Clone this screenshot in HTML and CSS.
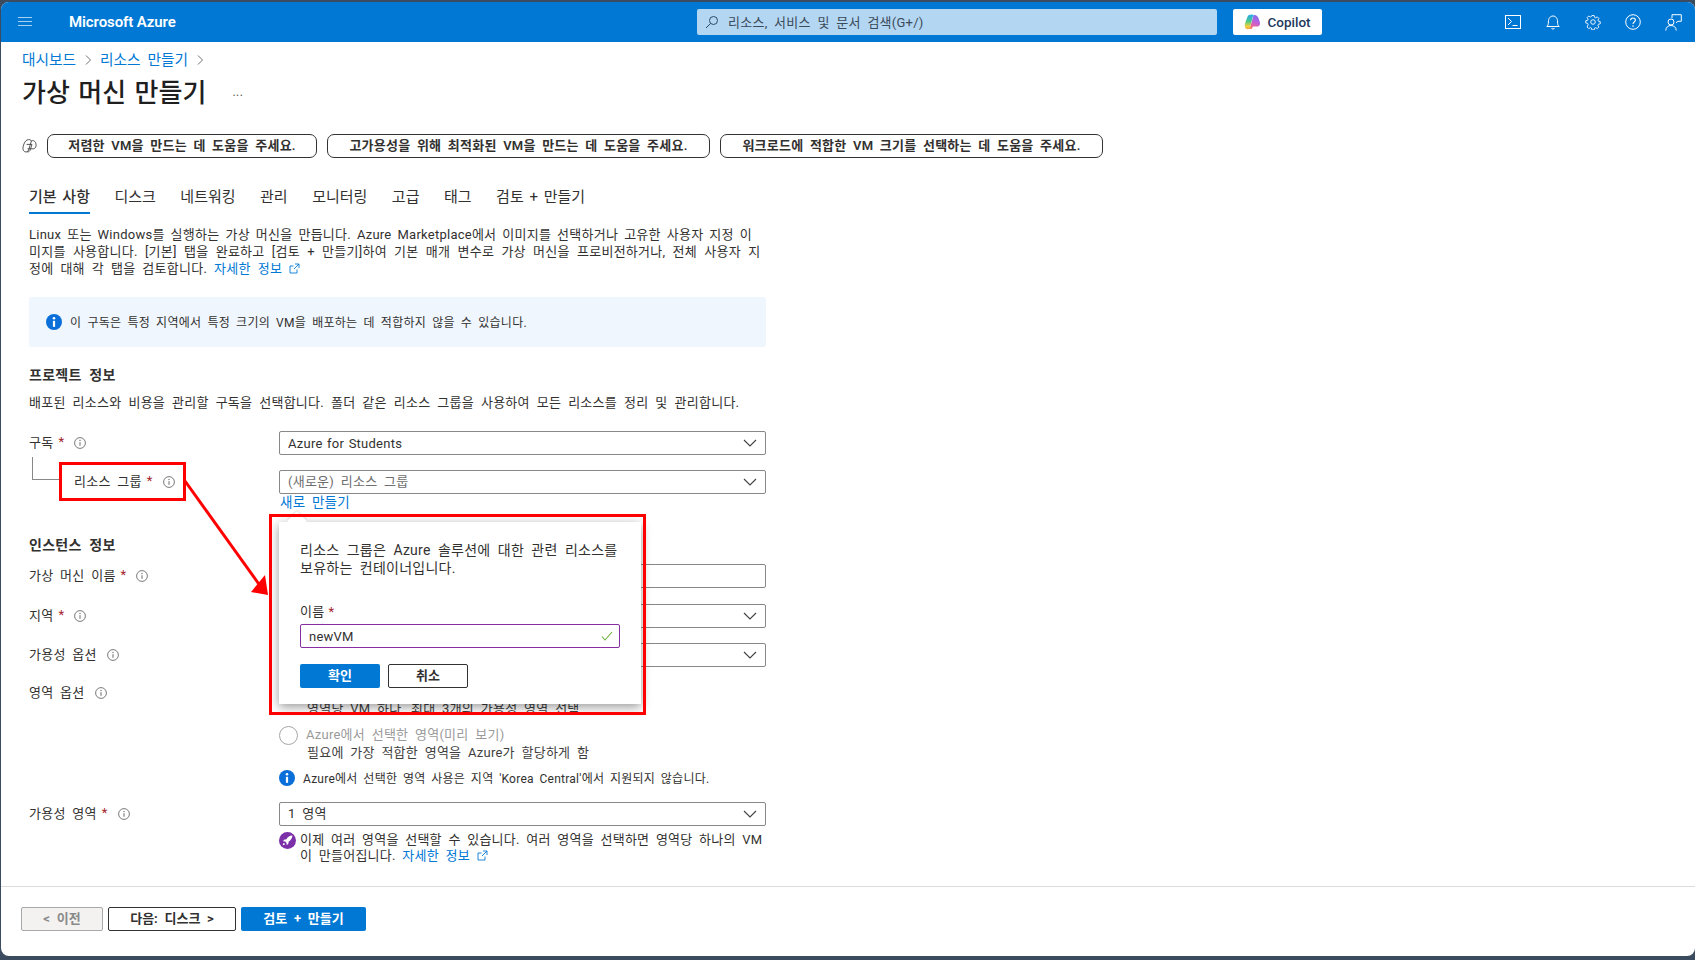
FILE: index.html
```html
<!DOCTYPE html>
<html lang="ko">
<head>
<meta charset="utf-8">
<title>가상 머신 만들기 - Microsoft Azure</title>
<link rel="stylesheet" href="styles.css">
</head>
<body>
<svg class="defs" width="0" height="0" aria-hidden="true">
  <defs>
    <symbol id="i-info" viewBox="0 0 12 12">
      <circle cx="6" cy="6" r="5.4" fill="none" stroke="#6b6b6b" stroke-width="0.9"/>
      <path d="M6 5.2v3.6" stroke="#6b6b6b" stroke-width="1"/>
      <circle cx="6" cy="3.5" r="0.65" fill="#6b6b6b"/>
    </symbol>
    <symbol id="i-chev" viewBox="0 0 14 8">
      <path d="M1 1l6 6 6-6" fill="none" stroke="#404040" stroke-width="1.1"/>
    </symbol>
    <symbol id="i-blue" viewBox="0 0 16 16">
      <circle cx="8" cy="8" r="8" fill="#0a6fd8"/>
      <circle cx="8" cy="4.2" r="1.3" fill="#fff"/>
      <path d="M8 6.8v6" stroke="#fff" stroke-width="2.2"/>
    </symbol>
    <symbol id="i-ext" viewBox="0 0 11 11">
      <path d="M8 6.5V10H1V3h3.5M6 1h4v4M10 1L5 6" fill="none" stroke="#0078d4" stroke-width="0.9"/>
    </symbol>
    <linearGradient id="cp-a" x1="0.4" y1="0" x2="0.4" y2="1"><stop offset="0" stop-color="#2aa8f2"/><stop offset="0.45" stop-color="#46c98a"/><stop offset="0.8" stop-color="#f2d13f"/><stop offset="1" stop-color="#f5a53a"/></linearGradient>
    <linearGradient id="cp-c" x1="0.7" y1="0" x2="0.3" y2="1"><stop offset="0" stop-color="#7a6ff0"/><stop offset="0.5" stop-color="#c45fd8"/><stop offset="0.85" stop-color="#f0668a"/><stop offset="1" stop-color="#f58a4a"/></linearGradient>
  </defs>
</svg>

<div class="page">
  <header class="topbar">
    <div class="brand-area">
      <button class="menu-btn" aria-label="메뉴">
        <svg width="14" height="10" viewBox="0 0 14 10"><path d="M0 .5h14M0 4.5h14M0 8.5h14" stroke="#a8d0f0" stroke-width="1"/></svg>
      </button>
      <span class="brand">Microsoft Azure</span>
    </div>
    <div class="search">
      <svg width="14" height="14" viewBox="0 0 14 14"><circle cx="8.5" cy="5.5" r="4" fill="none" stroke="#2b4a66" stroke-width="1"/><path d="M5.6 8.4L1 13" stroke="#2b4a66" stroke-width="1"/></svg>
      <span>리소스, 서비스 및 문서 검색(G+/)</span>
    </div>
    <button class="copilot">
      <svg width="17" height="16" viewBox="0 0 17 16">
        <path d="M10 1C12 .5 13.7 2 14.5 4L15.8 8C16.6 10.5 15.4 12.5 13 12.5H9L7.5 15H4C5.5 14.5 6.2 13 6.6 11.5L8.5 5C9 3.5 9 2 10 1Z" fill="url(#cp-c)"/>
        <path d="M5 1C6.5.3 9 .3 10 1 9 1.8 8.6 3.4 8.2 5L6.6 11.5C6.2 13.4 5.4 15.2 3.4 15.2 1.2 15 .3 12 1 9.5L3 4C3.5 2.5 4 1.5 5 1Z" fill="url(#cp-a)"/>
      </svg>
      <span>Copilot</span>
    </button>
    <div class="top-icons">
      <span class="top-icon"><svg width="16" height="14" viewBox="0 0 16 14"><rect x=".5" y=".5" width="15" height="13" fill="none" stroke="#fff"/><path d="M3 3l3.5 3.5L3 10M7.5 10.5h5" fill="none" stroke="#fff"/></svg></span>
      <span class="top-icon"><svg width="14" height="15" viewBox="0 0 14 15"><path d="M.8 11.5c1.2-1 1.6-2 1.6-4.5C2.4 3.4 4.2 1 7 1s4.6 2.4 4.6 6c0 2.5.4 3.5 1.6 4.5Z" fill="none" stroke="#fff"/><path d="M5.5 13a1.6 1.6 0 0 0 3 0" fill="none" stroke="#fff"/></svg></span>
      <span class="top-icon"><svg width="16" height="16" viewBox="0 0 16 16"><circle cx="8" cy="8" r="2.3" fill="none" stroke="#fff" stroke-width=".9"/><path d="M6.7.7h2.6l.4 2 1.3.6 1.8-1.1 1.8 1.8-1.1 1.8.6 1.3 2 .4v2.6l-2 .4-.6 1.3 1.1 1.8-1.8 1.8-1.8-1.1-1.3.6-.4 2H6.7l-.4-2-1.3-.6-1.8 1.1-1.8-1.8L2.5 10.8l-.6-1.3-2-.4V6.5l2-.4.6-1.3-1.1-1.8 1.8-1.8L5 2.3l1.3-.6Z" transform="translate(.9 .9) scale(.89)" fill="none" stroke="#fff" stroke-width="1"/></svg></span>
      <span class="top-icon"><svg width="16" height="16" viewBox="0 0 16 16"><circle cx="8" cy="8" r="7.3" fill="none" stroke="#fff"/><path d="M5.6 6.2C5.6 4.8 6.7 4 8 4s2.4.9 2.4 2.1c0 1.9-2.4 1.9-2.4 3.9" fill="none" stroke="#fff" stroke-width="1.1"/><circle cx="8" cy="12" r=".8" fill="#fff"/></svg></span>
      <span class="top-icon"><svg width="17" height="17" viewBox="0 0 17 17"><path d="M7 4.2V.7h9.3v6.6h-3.4l-1.9 1.5" fill="none" stroke="#fff"/><circle cx="6" cy="8" r="3" fill="none" stroke="#fff"/><path d="M.8 16.5c0-3.2 2.3-5 5.2-5s5.2 1.8 5.2 5" fill="none" stroke="#fff"/></svg></span>
    </div>
  </header>

  <main class="content">
    <nav class="crumbs">
      <a class="link">대시보드</a>
      <svg class="crumb-sep" width="6" height="10" viewBox="0 0 6 10"><path d="M1 .5l4.5 4.5L1 9.5" fill="none" stroke="#666" stroke-width=".9"/></svg>
      <a class="link">리소스 만들기</a>
      <svg class="crumb-sep" width="6" height="10" viewBox="0 0 6 10"><path d="M1 .5l4.5 4.5L1 9.5" fill="none" stroke="#666" stroke-width=".9"/></svg>
    </nav>
    <div class="title-row">
      <h1>가상 머신 만들기</h1>
      <span class="ellipsis">...</span>
    </div>

    <div class="suggests">
      <svg class="sg-icon" width="15" height="14" viewBox="0 0 15 14"><path d="M5 1C7 .2 9 .6 9.4 2L7 9.8C6.6 11.6 5.6 13 4 13 2 13 .6 11 1 8.4 1.4 5.6 3 1.8 5 1ZM9.4 2C11.4.8 13.6 2.4 14 5 14.4 7.2 13.6 9.6 11.4 9.8H5.6" fill="none" stroke="#444" stroke-width=".9"/><path d="M4.6 5.4H10L8.2 11c-.4 1.2-1.4 2-2.8 2" fill="none" stroke="#444" stroke-width=".9"/></svg>
      <button class="pill p1">저렴한 VM을 만드는 데 도움을 주세요.</button>
      <button class="pill p2">고가용성을 위해 최적화된 VM을 만드는 데 도움을 주세요.</button>
      <button class="pill p3">워크로드에 적합한 VM 크기를 선택하는 데 도움을 주세요.</button>
    </div>

    <div class="tabs">
      <span class="tab active">기본 사항</span>
      <span class="tab">디스크</span>
      <span class="tab">네트워킹</span>
      <span class="tab">관리</span>
      <span class="tab">모니터링</span>
      <span class="tab">고급</span>
      <span class="tab">태그</span>
      <span class="tab">검토 + 만들기</span>
    </div>

    <div class="form">
      <p class="intro">Linux 또는 Windows를 실행하는 가상 머신을 만듭니다. Azure Marketplace에서 이미지를 선택하거나 고유한 사용자 지정 이<br><span class="intro-l2">미지를 사용합니다. [기본] 탭을 완료하고 [검토 + 만들기]하여 기본 매개 변수로 가상 머신을 프로비전하거나, 전체 사용자 지</span><br><span class="intro-l3">정에 대해 각 탭을 검토합니다. <a class="link">자세한 정보 <svg class="ext" width="11" height="11"><use href="#i-ext"/></svg></a></span></p>

      <div class="notice">
        <svg width="16" height="16"><use href="#i-blue"/></svg>
        <span class="lift-sm">이 구독은 특정 지역에서 특정 크기의 VM을 배포하는 데 적합하지 않을 수 있습니다.</span>
      </div>

      <h2 class="h-project">프로젝트 정보</h2>
      <p class="sub">배포된 리소스와 비용을 관리할 구독을 선택합니다. 폴더 같은 리소스 그룹을 사용하여 모든 리소스를 정리 및 관리합니다.</p>

      <div class="row r-sub">
        <div class="lab">구독<b>*</b><svg class="inf" width="12" height="12"><use href="#i-info"/></svg></div>
        <div class="sel latin">Azure for Students<svg width="14" height="8"><use href="#i-chev"/></svg></div>
      </div>
      <div class="row r-rg">
        <div class="lab lab-child">리소스 그룹<b>*</b><svg class="inf" width="12" height="12"><use href="#i-info"/></svg></div>
        <div class="sel muted"><span class="lift">(새로운) 리소스 그룹</span><svg width="14" height="8"><use href="#i-chev"/></svg></div>
      </div>
      <a class="link new-link">새로 만들기</a>

      <h2 class="h-inst">인스턴스 정보</h2>
      <div class="row r-vm">
        <div class="lab">가상 머신 이름<b>*</b><svg class="inf" width="12" height="12"><use href="#i-info"/></svg></div>
        <div class="sel"></div>
      </div>
      <div class="row r-region">
        <div class="lab">지역<b>*</b><svg class="inf" width="12" height="12"><use href="#i-info"/></svg></div>
        <div class="sel"><svg width="14" height="8"><use href="#i-chev"/></svg></div>
      </div>
      <div class="row r-avail">
        <div class="lab">가용성 옵션<svg class="inf" width="12" height="12"><use href="#i-info"/></svg></div>
        <div class="sel"><svg width="14" height="8"><use href="#i-chev"/></svg></div>
      </div>
      <div class="row r-zone">
        <div class="lab">영역 옵션<svg class="inf" width="12" height="12"><use href="#i-info"/></svg></div>
        <div class="zone-field">
          <div class="opt-desc first">영역당 VM 하나, 최대 3개의 가용성 영역 선택</div>
          <div class="opt"><span class="radio"></span><span class="lift">Azure에서 선택한 영역(미리 보기)</span></div>
          <div class="opt-desc">필요에 가장 적합한 영역을 Azure가 할당하게 함</div>
          <div class="hint"><svg width="16" height="16"><use href="#i-blue"/></svg><span class="lift-sm">Azure에서 선택한 영역 사용은 지역 'Korea Central'에서 지원되지 않습니다.</span></div>
        </div>
      </div>
      <div class="row r-az">
        <div class="lab">가용성 영역<b>*</b><svg class="inf" width="12" height="12"><use href="#i-info"/></svg></div>
        <div class="az-field">
          <div class="sel"><span class="lift">1 영역</span><svg width="14" height="8"><use href="#i-chev"/></svg></div>
          <div class="promo">
            <svg width="17" height="17" viewBox="0 0 17 17"><circle cx="8.5" cy="8.5" r="8.5" fill="#7b2fa8"/><path d="M13 3.6c-2.6.2-4.4 1.6-5.6 3.6L5 7.8l-1 1.4 2.2.4 1.2 1.2.4 2.2 1.4-1 .6-2.4c2-1.2 3.4-3.2 3.6-6ZM5 11c-.8.4-1.2 1.2-1.2 2.2 1 0 1.8-.4 2.2-1.2Z" fill="#fff"/></svg>
            <p>이제 여러 영역을 선택할 수 있습니다. 여러 영역을 선택하면 영역당 하나의 VM이 만들어집니다. <a class="link">자세한 정보 <svg class="ext" width="11" height="11"><use href="#i-ext"/></svg></a></p>
          </div>
        </div>
      </div>
    </div>
  </main>

  <footer class="footer">
    <button class="btn disabled">&lt; 이전</button>
    <button class="btn next">다음: 디스크 &gt;</button>
    <button class="btn primary">검토 + 만들기</button>
  </footer>

  <!-- Screenshot annotations and the flyout that lie over the form -->
  <span class="tree-line"></span>
  <span class="mark mark-label"></span>
  <svg class="arrow" width="100" height="130" viewBox="0 0 100 130">
    <path d="M2 2L78 108" stroke="#f00" stroke-width="3" fill="none"/>
    <path d="M85 116L68 113L82 96Z" fill="#f00"/>
  </svg>
  <div class="flyout">
    <span class="notch"></span>
    <p>리소스 그룹은 Azure 솔루션에 대한 관련 리소스를 보유하는 컨테이너입니다.</p>
    <div class="fly-label">이름<b>*</b></div>
    <div class="fly-input">newVM<svg width="12" height="10" viewBox="0 0 12 10"><path d="M1 5.5L4 9l7-8" fill="none" stroke="#6bb13a" stroke-width="1.1"/></svg></div>
    <div class="fly-btns">
      <button class="btn primary fly-btn">확인</button>
      <button class="btn next fly-btn">취소</button>
    </div>
  </div>
  <span class="mark mark-fly"></span>
</div>
</body>
</html>
```

FILE: styles.css
```css
* { box-sizing: border-box; }
html, body { margin: 0; height: 100%; }
body {
  background: #3b4c60;
  padding: 2px 0 4px 1px;
  font-family: Roboto, "Noto Sans CJK KR", sans-serif;
  font-size: 13px;
  letter-spacing: .25px;
  word-spacing: 3.2px;
  color: #323130;
  overflow: hidden;
}
.defs { position: absolute; }
p, h1, h2 { margin: 0; }
button { font: inherit; color: inherit; padding: 0; background: none; border: 0; letter-spacing: inherit; word-spacing: inherit; }
.lift { margin-bottom: 3px; }
.lift-sm { margin-bottom: 1px; }
.page {
  position: relative;
  height: 954px;
  background: #fff;
  border-radius: 8px 8px 8px 8px;
  overflow: hidden;
  display: flex;
  flex-direction: column;
}
.link { color: #0078d4; text-decoration: none; }

/* top bar */
.topbar {
  flex: 0 0 40px;
  background: #0078d4;
  display: flex;
  align-items: center;
  color: #fff;
}
.brand-area { flex: 0 0 696px; display: flex; align-items: center; }
.menu-btn { width: 68px; padding-left: 17px; display: flex; align-items: center; }
.brand { font-size: 15px; font-weight: 600; letter-spacing: -.1px; word-spacing: 0; }
.search {
  flex: 0 0 520px;
  height: 26px;
  background: #b3d6f2;
  border-radius: 2px;
  display: flex;
  align-items: center;
  gap: 9px;
  padding-left: 8px;
  color: #3b4a58;
  font-size: 13px;
}
.search span { margin-bottom: 2px; }
.copilot {
  flex: 0 0 89px;
  height: 26px;
  margin-left: 16px;
  background: #fff;
  border-radius: 2px;
  display: flex;
  align-items: center;
  justify-content: center;
  gap: 6px;
  color: #22395d;
  font-size: 13.5px;
  font-weight: 500;
  letter-spacing: 0;
}
.top-icons { margin-left: auto; margin-right: 0; display: flex; padding-right: 2px; }
.top-icon { width: 40px; height: 40px; display: flex; align-items: center; justify-content: center; }

/* main */
.content { flex: 1 1 auto; overflow: hidden; padding: 0 0 0 21px; }
.crumbs { height: 36px; padding-bottom: 4px; display: flex; align-items: center; font-size: 14.7px; letter-spacing: 0; }
.crumb-sep { margin: 3px 9px 0 9px; }
.title-row { height: 30px; padding-bottom: 6px; display: flex; align-items: center; }
h1 { font-size: 26px; font-weight: 500; color: #1f1f1f; letter-spacing: 0; word-spacing: 2px; }
.ellipsis { margin-left: 26px; margin-top: 4px; font-size: 12px; color: #555; letter-spacing: 0.5px; }

.suggests { margin-top: 26px; height: 24px; display: flex; align-items: center; }
.sg-icon { margin-right: 10px; }
.pill {
  height: 24px;
  margin-right: 10px;
  padding-bottom: 3px;
  border: 1px solid #333;
  border-radius: 7px;
  background: #fff;
  font-size: 13px;
  font-weight: 600;
  text-align: center;
  word-spacing: 3px;
}
.p1 { width: 270px; }
.p2 { width: 383px; }
.p3 { width: 383px; }

.tabs { margin: 26px 0 0 7px; height: 30px; display: flex; gap: 24.5px; font-size: 15px; letter-spacing: 0; }
.tab { height: 30px; line-height: 26px; color: #323130; word-spacing: 2px; }
.tab.active { font-weight: 500; border-bottom: 2px solid #0078d4; }

/* form */
.form { width: 744px; padding-left: 7px; }
.intro { margin-top: 12px; line-height: 17px; word-spacing: 2.5px; }
.intro-l2 { word-spacing: 3.8px; }
.intro-l3 { word-spacing: 3.5px; }
.ext { vertical-align: -1px; margin-left: 0; }
.notice {
  margin-top: 20px;
  height: 50px;
  background: #f0f6fe;
  border-radius: 2px;
  display: flex;
  align-items: center;
  gap: 8px;
  padding-left: 17px;
  font-size: 12px;
  word-spacing: 2.9px;
}
h2 { font-size: 14px; font-weight: 700; line-height: 20px; color: #323130; word-spacing: 4px; }
.h-project { margin-top: 18px; }
.sub { margin-top: 9px; line-height: 17px; word-spacing: 3.5px; }
.row { display: flex; }
.lab { flex: 0 0 250px; height: 24px; padding-bottom: 4px; display: flex; align-items: center; }
.lab b { color: #a4262c; font-weight: 400; margin-left: 5px; }
.inf { margin-left: 10px; margin-top: 4px; }
.sel {
  flex: 1 1 auto;
  height: 24px;
  border: 1px solid #8a8886;
  border-radius: 2px;
  padding: 0 8px;
  display: flex;
  align-items: center;
  justify-content: space-between;
}
.sel svg { margin-left: auto; }
.sel.muted { color: #6e6e6e; }
.sel.latin { word-spacing: 1px; }
.r-sub { margin-top: 20px; }
.r-rg { margin-top: 15px; }
.lab-child { padding-left: 45px; }
.new-link { display: block; margin: 0 0 0 251px; line-height: 16px; font-size: 13.5px; word-spacing: 3px; }
.h-inst { margin-top: 25px; }
.r-vm { margin-top: 9px; }
.r-region { margin-top: 16px; }
.r-avail { margin-top: 15px; }
.r-zone { margin-top: 14px; }
.zone-field { padding-top: 19px; flex: 1 1 auto; }
.opt-desc { line-height: 18px; padding-left: 28px; color: #3e3e3e; }
.opt { margin-top: 8px; height: 18px; display: flex; align-items: center; gap: 8px; color: #9a9a9a; }
.radio { width: 19px; height: 19px; border: 1px solid #a6a6a6; border-radius: 50%; }
.hint { margin-top: 7px; height: 18px; display: flex; align-items: center; gap: 8px; font-size: 12px; word-spacing: 2.5px; }
.r-az { margin-top: 15px; }
.az-field { flex: 1 1 auto; }
.promo { display: flex; margin-top: 6px; gap: 4px; align-items: flex-start; word-spacing: 3.1px; }
.promo svg { flex: 0 0 17px; margin-top: 0; }
.promo p { line-height: 16px; }

/* footer */
.footer {
  flex: 0 0 70px;
  border-top: 1px solid #dcdcdc;
  display: flex;
  gap: 5px;
  padding: 20px 0 0 20px;
}
.btn { height: 24px; padding-bottom: 3px; border-radius: 2px; font-size: 13px; font-weight: 700; letter-spacing: 0; word-spacing: 3.5px; }
.btn.disabled { width: 82px; background: #f3f2f1; border: 1px solid #a8a8a8; color: #8a8a8a; }
.btn.next { width: 128px; background: #fff; border: 1px solid #323130; }
.btn.primary { width: 125px; background: #0078d4; color: #fff; }

/* overlays */
.tree-line {
  position: absolute;
  left: 31px; top: 455px;
  width: 27px; height: 23px;
  border-left: 1px solid #8a8886;
  border-bottom: 1px solid #8a8886;
}
.mark { position: absolute; border: 3px solid #f00; pointer-events: none; }
.mark-label { left: 58px; top: 460px; width: 127px; height: 39px; }
.mark-fly { left: 268px; top: 512px; width: 377px; height: 201px; }
.arrow { position: absolute; left: 182px; top: 477px; }
.flyout {
  position: absolute;
  left: 278px; top: 520px;
  width: 362px; height: 182px;
  background: #fff;
  padding: 20px 20px 20px 21px;
  box-shadow: 0 3px 10px rgba(0,0,0,.4);
  font-size: 14px;
  word-spacing: 3.6px;
}
.notch {
  position: absolute;
  left: 11px; top: -8px;
  width: 14px; height: 14px;
  background: #fff;
  transform: rotate(45deg);
  box-shadow: -1px -1px 2px rgba(0,0,0,.12);
}
.flyout p { position: relative; line-height: 18px; margin-top: -1px; }
.fly-label { margin-top: 26px; line-height: 18px; font-size: 13px; }
.fly-label b { color: #a4262c; font-weight: 400; margin-left: 4px; }
.fly-input {
  margin-top: 3px;
  width: 320px; height: 24px;
  border: 1px solid #8a2da5;
  border-radius: 2px;
  padding: 0 6px 0 8px;
  display: flex;
  align-items: center;
  justify-content: space-between;
  font-size: 13px;
}
.fly-btns { margin-top: 16px; display: flex; gap: 8px; }
.fly-btn.btn { width: 80px; }
```
